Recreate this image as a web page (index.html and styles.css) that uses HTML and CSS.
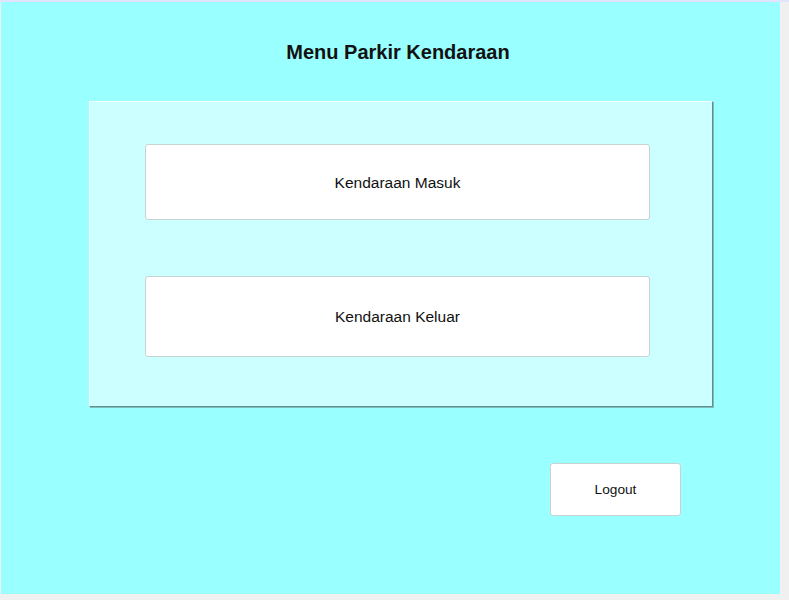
FILE: index.html
```html
<!DOCTYPE html>
<html>
<head>
<meta charset="utf-8">
<link rel="stylesheet" href="styles.css">
</head>
<body>
<div class="window">
  <h1 class="title">Menu Parkir Kendaraan</h1>
  <div class="panel">
    <button class="btn btn-masuk">Kendaraan Masuk</button>
    <button class="btn btn-keluar">Kendaraan Keluar</button>
  </div>
  <div class="footer">
    <button class="btn btn-logout">Logout</button>
  </div>
</div>
</body>
</html>
```
FILE: styles.css
```css
html, body {
  margin: 0;
  padding: 0;
}
body {
  width: 789px;
  height: 600px;
  background: #f0f0f0;
  box-sizing: border-box;
  border-top: 2px solid #e2e4fb;
  padding-left: 1px;
  font-family: "Liberation Sans", Arial, sans-serif;
  overflow: hidden;
}
.window {
  width: 779px;
  height: 592px;
  background: #99ffff;
  display: flex;
  flex-direction: column;
  box-sizing: border-box;
  padding-top: 38px;
}
.title {
  margin: 0;
  padding-left: 15px;
  font-size: 20px;
  line-height: 24px;
  font-weight: bold;
  color: #111;
  text-align: center;
}
.panel {
  margin-top: 37px;
  margin-left: 88px;
  width: 624px;
  height: 306px;
  box-sizing: border-box;
  background: #ccffff;
  border-top: 1px solid #f4ffff;
  border-left: 1px solid #f4ffff;
  border-right: 1px solid #5f8f90;
  border-bottom: 1px solid #5f8f90;
  box-shadow: 1px 1px 0 #7fbcbc;
  display: flex;
  flex-direction: column;
  padding-top: 42px;
  padding-left: 55px;
  gap: 56px;
}
.btn {
  font-family: "Liberation Sans", Arial, sans-serif;
  background: #fff;
  border: 1px solid #c8d2d2;
  border-radius: 3px;
  color: #111;
  padding: 0;
  margin: 0;
  box-sizing: border-box;
}
.btn-masuk {
  width: 505px;
  height: 76px;
  font-size: 15.5px;
  padding-top: 1px;
}
.btn-keluar {
  width: 505px;
  height: 81px;
  font-size: 15.5px;
}
.footer {
  margin-top: 56px;
  padding-left: 549px;
}
.btn-logout {
  width: 131px;
  height: 53px;
  font-size: 13.7px;
}
```
